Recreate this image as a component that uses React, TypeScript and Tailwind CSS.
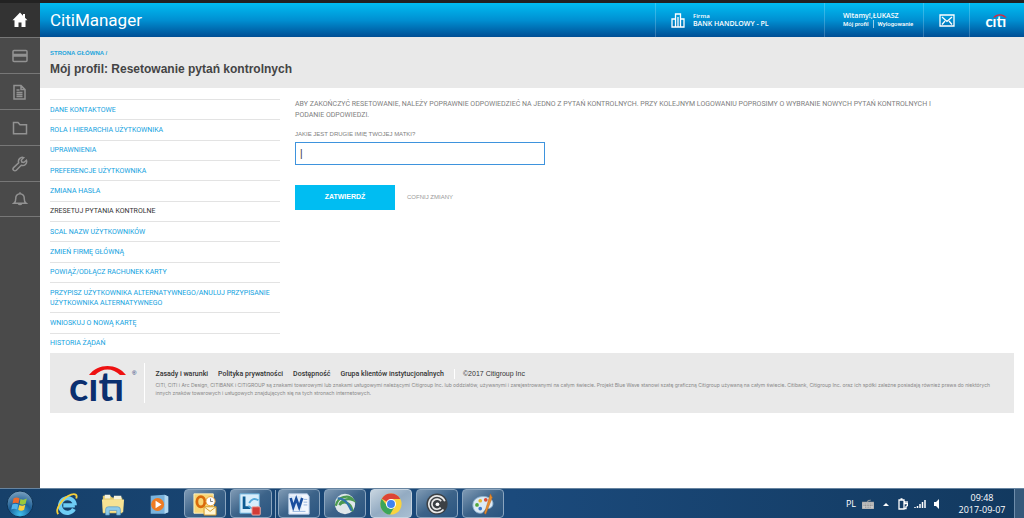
import type { ReactNode } from 'react';
import clsx from 'clsx';

const menu = [
  'DANE KONTAKTOWE',
  'ROLA I HIERARCHIA UŻYTKOWNIKA',
  'UPRAWNIENIA',
  'PREFERENCJE UŻYTKOWNIKA',
  'ZMIANA HASŁA',
  'ZRESETUJ PYTANIA KONTROLNE',
  'SCAL NAZW UŻYTKOWNIKÓW',
  'ZMIEŃ FIRMĘ GŁÓWNĄ',
  'POWIĄŻ/ODŁĄCZ RACHUNEK KARTY',
  'PRZYPISZ UŻYTKOWNIKA ALTERNATYWNEGO/ANULUJ PRZYPISANIE UŻYTKOWNIKA ALTERNATYWNEGO',
  'WNIOSKUJ O NOWĄ KARTĘ',
  'HISTORIA ŻĄDAŃ',
];
const activeItem = 'ZRESETUJ PYTANIA KONTROLNE';

const footerLinks = ['Zasady i warunki', 'Polityka prywatności', 'Dostępność', 'Grupa klientów instytucjonalnych'];

const sideIcons: { label: string; icon: ReactNode }[] = [
  {
    label: 'Karty',
    icon: (
      <>
        <rect x="1" y="2.5" width="14" height="11" rx="1" />
        <path d="M1 6.5h14M1 8h14" />
      </>
    ),
  },
  {
    label: 'Wyciągi',
    icon: <path d="M2 1.500h7l4 4v9.500H2zM9 1.500v4h4M4.500 6h3M4.500 8.500h6M4.500 10.500h6M4.500 12.500h6" />,
  },
  {
    label: 'Dokumenty',
    icon: <path d="M1.500 2.500h4.500l2 2.300h6.500v9h-13z" />,
  },
  {
    label: 'Narzędzia',
    icon: (
      <path d="M14.400 4.200l-2.600 2.300-2-.4-.5-2 2.400-2.500a4 4 0 0 0-5 5.200L1.600 11.600a1.800 1.800 0 0 0 2.700 2.700l4.900-5a4 4 0 0 0 5.200-5.100z" />
    ),
  },
  {
    label: 'Alerty',
    icon: (
      <path d="M2 12.200c1.400-1 1.800-2.200 1.800-5A4.200 4.200 0 0 1 8 2.700a4.200 4.200 0 0 1 4.200 4.500c0 2.800.4 4 1.800 5zM6.300 12.400a1.800 1.800 0 0 0 3.400 0M8 1.200v1.500" />
    ),
  },
];

function CitiLogo({ className, text, arc }: { className: string; text: string; arc: string }) {
  return (
    <svg viewBox="0 0 64 40" className={clsx('overflow-visible', className)} role="img" aria-label="citi">
      <path d="M21 12C30 0 49 0 58 12h-6C45 4.500 34 4.500 27 12z" className={arc} />
      <text x="1" y="38" fontSize="40" fontWeight="700" fontFamily="Lato, sans-serif" className={text}>
        cıtı
      </text>
    </svg>
  );
}

function TaskButton({ label, open, active, children }: { label: string; open?: boolean; active?: boolean; children: ReactNode }) {
  return (
    <button
      aria-label={label}
      className={clsx(
        'flex h-[29px] w-[42px] items-center justify-center rounded-sm border',
        !open && 'border-transparent',
        open && !active && 'border-[#8aa5bf] bg-gradient-to-br from-[#7f9ab4] via-[#3c6389] to-[#2a5580]',
        active && 'border-[#c5d3e0] bg-gradient-to-br from-[#c9d6e1] via-[#93abc2] to-[#a9bfd2]',
      )}
    >
      <svg viewBox="0 0 26 26" className="size-6">
        {children}
      </svg>
    </button>
  );
}

function Taskbar() {
  return (
    <footer className="flex h-[30px] items-center border-t border-[#6784a0] bg-gradient-to-r from-[#16406a] via-[#1b4a7c] to-[#12395f] font-['Open_Sans',sans-serif]">
      <button aria-label="Start" className="ml-1.5 mr-3">
        <svg viewBox="0 0 28 28" className="size-7">
          <defs>
            <radialGradient id="orb" cx=".5" cy=".9" r=".9">
              <stop offset="0" stopColor="#3fc0ee" />
              <stop offset=".5" stopColor="#1b5f97" />
              <stop offset="1" stopColor="#7fa3c0" />
            </radialGradient>
          </defs>
          <circle cx="14" cy="14" r="13" fill="url(#orb)" stroke="#0e3355" />
          <path d="M7.500 8.500q3-1.800 6 0l-1 5q-3-1.600-6 0z" fill="#ee6a2c" />
          <path d="M14.500 9q3 1.600 6.300-.4l-1.200 5.200q-3 1.700-6 .2z" fill="#9ac93c" />
          <path d="M6.300 14.600q3-1.600 6 0l-1.200 5q-2.900-1.500-5.800 0z" fill="#54b4ea" />
          <path d="M13.300 15q3 1.600 6-.2l-1.200 5q-3 1.700-5.900 0z" fill="#fcd13c" />
        </svg>
      </button>
      <div className="flex items-center gap-1">
        <TaskButton label="Internet Explorer">
          <path d="M21.500 14.500H9M20.500 18.500a8 8 0 1 1 1-4" fill="none" stroke="#6fcdf5" strokeWidth="4.500" />
          <path d="M3.500 24C-.5 19 8 6 17.500 2.800c5-1.700 6.800.8 5.500 4.200" fill="none" stroke="#f5cf3a" strokeWidth="2" />
        </TaskButton>
        <TaskButton label="Eksplorator Windows">
          <path d="M2 4h8l2 2h11v17H2z" fill="#e3c968" />
          <path d="M4 3h6v4H4zM14 4h8v4h-8z" fill="#f6f2dc" />
          <path d="M1 8h24l-1 14H2z" fill="#f6e293" />
          <path d="M5 25v-6q0-3 3-3h10q3 0 3 3v6h-4v-5H9v5z" fill="#8ecbea" stroke="#5596bd" strokeWidth=".7" />
        </TaskButton>
        <TaskButton label="Windows Media Player">
          <path d="M4 4l15-1 4 2v17l-4 1.500H4z" fill="#79b3dc" />
          <path d="M19 3l4 2v17l-4 1.500z" fill="#b4d9f0" />
          <circle cx="11.500" cy="13.500" r="7" fill="#ef7b22" />
          <path d="M9.300 9.500l6.500 4-6.500 4z" fill="#fff" />
        </TaskButton>
        <TaskButton label="Outlook" open>
          <path d="M1 2h21v21H1z" fill="#f8d777" />
          <path d="M1 2h21v21H1z" fill="none" stroke="#fff4c8" />
          <ellipse cx="8.500" cy="10.500" rx="4.300" ry="5.500" fill="none" stroke="#d96a0b" strokeWidth="3" />
          <circle cx="19" cy="10" r="5" fill="#fff" stroke="#e5962b" />
          <path d="M19 7v3.300h2.500" fill="none" stroke="#777" />
          <path d="M12 16h13v9H12z" fill="#fff6d5" stroke="#d59a24" />
          <path d="M12 16l6.500 5 6.500-5" fill="none" stroke="#d59a24" />
        </TaskButton>
        <TaskButton label="Lync" open>
          <path d="M1 2h21v21H1z" fill="#d8eefb" stroke="#62aedb" />
          <path d="M5.500 5v12H12" fill="none" stroke="#0d5b92" strokeWidth="3" />
          <path d="M11 12q4-7 10-3M10 15q5 5 11 1" fill="none" stroke="#55a9d8" strokeWidth="2" />
          <rect x="14" y="16" width="9" height="9" rx="1" fill="#d33c36" stroke="#f1b3ac" />
        </TaskButton>
        <span className="-mx-0.5 h-7 w-0.5 border-r border-[#8aa5bf]" />
        <TaskButton label="Word" open>
          <path d="M2 2h20l2 3v19H2z" fill="#f3f7fd" stroke="#b6cdea" />
          <path d="M2 4h14v15H2z" fill="#dce9f8" />
          <path d="M4 6.500l2.800 10 3.200-9 3.200 9L16.500 6.500" fill="none" stroke="#194e9e" strokeWidth="2.800" />
          <path d="M18 8h4M18 11h4M18 14h4M6 21h14" stroke="#8fb0dc" />
        </TaskButton>
        <TaskButton label="AnyConnect" open>
          <circle cx="13" cy="13" r="11" fill="#dfe7ea" />
          <path d="M3 15C5 5 17 2 22 9c-7-3-13 0-15 5 5-5 13-3 14 7" fill="none" stroke="#4b9a51" strokeWidth="2.500" />
          <path d="M5 7c8 0 11 5 15 13" fill="none" stroke="#3174ae" strokeWidth="2.500" />
        </TaskButton>
        <TaskButton label="Chrome" open active>
          <circle cx="13" cy="13" r="11.500" fill="#f9d33f" />
          <path d="M13 13L3 7.300A11.500 11.500 0 0 1 23 7.500H13z" fill="#dc4436" />
          <path d="M3 7.300A11.500 11.500 0 0 0 12 24.500l5-9L13 13l-4 2.500z" fill="#3ba55a" />
          <circle cx="13" cy="13" r="5.500" fill="#fff" />
          <circle cx="13" cy="13" r="4.300" fill="#3f82ef" />
        </TaskButton>
        <TaskButton label="Citrix Receiver" open>
          <circle cx="13" cy="13" r="11.500" fill="#3c4044" />
          <path d="M20 19a9 9 0 1 1 1.500-9M17 17a5.500 5.500 0 1 1 .5-7" fill="none" stroke="#e8e8e8" strokeWidth="1.800" />
          <circle cx="13.500" cy="13.300" r="2" fill="#fff" />
        </TaskButton>
        <TaskButton label="Paint" open>
          <path d="M2 14C2 6 12 3 19 6s6 12-1 12c-4 0-3 5-8 5s-8-4-8-9z" fill="#dceaf5" stroke="#8eb2cf" />
          <circle cx="6.500" cy="14" r="2" fill="#50a73b" />
          <circle cx="10" cy="9.500" r="2" fill="#e5b62c" />
          <circle cx="16" cy="8.500" r="2" fill="#d84a38" />
          <circle cx="10" cy="18" r="2" fill="#3c78cc" />
          <path d="M21 2l2 4-7 18-1.500-1z" fill="#e88d2f" stroke="#b5611a" strokeWidth=".5" />
        </TaskButton>
      </div>
      <div className="ml-auto flex items-center gap-1.5 text-white">
        <span className="text-[9px]">PL</span>
        <svg viewBox="0 0 12 10" className="w-3">
          <path d="M0 3h12v7H0zM5 3q0-2 4-2" fill="#c8c8c8" stroke="#8a8a8a" strokeWidth=".6" />
          <path d="M1.500 5h9M1.500 6.500h9M3 8.200h6" stroke="#777" strokeWidth=".7" strokeDasharray="1 .6" />
        </svg>
        <svg viewBox="0 0 12 6" className="w-3">
          <path d="M3 5L6 2l3 3z" fill="#fff" />
        </svg>
        <svg viewBox="0 0 10 12" className="w-2.5">
          <path d="M1 2h5v9H1zM2.500.8h2M7 3v2M9 3v2M6.500 5.500h3v2l-1.500 1v2H6" fill="none" stroke="#fff" strokeWidth="1.300" />
        </svg>
        <svg viewBox="0 0 12 10" className="w-3">
          <path d="M1 9V8M3.500 9V7M6 9V5M8.500 9V3M11 9V1" stroke="#fff" strokeWidth="1.500" />
        </svg>
        <svg viewBox="0 0 12 10" className="w-3">
          <path d="M2 3h2L7 0v10L4 7H2z" fill="#fff" />
        </svg>
        <time className="w-16 text-center text-[9px] leading-3">
          09:48
          <br />
          2017-09-07
        </time>
      </div>
      <span className="w-2.5 self-stretch border-l border-[#6f8dab] bg-[#36597b]" />
    </footer>
  );
}

function Header() {
  return (
    <header className="flex h-[34px] items-stretch bg-gradient-to-b from-[#00bdf2] via-[#0090d2] to-[#004e95] font-[Roboto,sans-serif] text-white">
      <a href="#" className="flex-1 self-center px-2.5 text-[17px] leading-5">CitiManager</a>
      <div className="flex w-[169px] items-center gap-2 border-l border-white/20 pl-[15px]">
        <svg viewBox="0 0 14 15" className="w-3.5" fill="none" stroke="currentColor" strokeWidth="1.300">
          <path d="M4.500 14V1h5v13M4.500 6H1v8h12V6H9.500M.500 14h13M7 14V4" />
        </svg>
        <p className="font-['Open_Sans',sans-serif] text-[7px] font-semibold leading-2">
          <span className="block text-[6px]">Firma</span>
          BANK HANDLOWY - PL
        </p>
      </div>
      <div className="flex w-[99px] flex-col justify-center border-l border-white/20 pl-[18px] font-medium">
        <p className="font-['Open_Sans',sans-serif] text-[7px] font-semibold leading-2">Witamy!,ŁUKASZ</p>
        <p className="flex gap-1 text-[6px] leading-2">
          <a href="#">Mój profil</a>
          <span className="border-l border-white/60" />
          <a href="#">Wylogowanie</a>
        </p>
      </div>
      <a href="#" aria-label="Wiadomości" className="flex w-[46px] items-center justify-center border-l border-white/20">
        <svg viewBox="0 0 16 13" className="w-4" fill="none" stroke="currentColor" strokeWidth="1.300">
          <path d="M1 1h14v11H1zM3 3l5 4.500L13 3M3 10.500l3-3.500M13 10.500L10 7" />
        </svg>
      </a>
      <a href="#" className="flex w-[55px] items-center border-l border-white/20 pl-[15px]">
        <CitiLogo className="w-6" text="fill-white" arc="fill-[#d8283f]" />
      </a>
    </header>
  );
}

export default function App() {
  return (
    <div className="flex min-h-screen flex-col bg-white font-['Liberation_Sans',sans-serif]">
      <div className="flex flex-1">
        <nav aria-label="Główne" className="w-10 shrink-0 bg-[#4a4a4a]">
          <a href="#" aria-label="Start" className="flex h-[37px] items-center justify-center border-t-3 border-[#222] bg-[#333] text-white">
            <svg viewBox="0 0 16 16" className="w-4" fill="currentColor">
              <path d="M8 .5L.5 8.300h2V15h4v-4.500h3V15h4V8.300h2L13 5.700V2h-2v1.700z" />
            </svg>
          </a>
          {sideIcons.map((item) => (
            <a
              key={item.label}
              href="#"
              aria-label={item.label}
              className="flex h-9 items-center justify-center border-t border-[#777] text-[#929292] last:border-b"
            >
              <svg viewBox="0 0 16 16" className="w-4" fill="none" stroke="currentColor" strokeWidth="1.500">
                {item.icon}
              </svg>
            </a>
          ))}
        </nav>

        <div className="flex min-w-0 flex-1 flex-col border-t-3 border-[#222]">
          <Header />
          <div className="h-[51px] bg-[#e9e9e9] px-2.5 pt-3">
            <a href="#" className="block text-[6px] font-bold leading-2 text-[#1ea5dc]">STRONA GŁÓWNA /</a>
            <h1 className="mt-1 text-xs font-bold leading-4 text-[#444]">Mój profil: Resetowanie pytań kontrolnych</h1>
          </div>

          <main className="flex gap-[15px] px-2.5 pt-[11px]">
            <ul className="flex min-h-[254px] w-[230px] shrink-0 flex-col font-[Roboto,sans-serif] text-[7px] leading-[10px] text-[#12a2e0]">
              {menu.map((item) => (
                <li key={item} className="flex grow items-center border-t border-[#e3e3e3] py-1">
                  <a href="#" className={clsx(item === activeItem && 'text-[#333]')}>{item}</a>
                </li>
              ))}
            </ul>
            <form className="min-w-0 text-[7px] text-[#808080]" onSubmit={(e) => e.preventDefault()}>
              <p className="max-w-[645px] font-[Roboto,sans-serif] leading-[11px]">
                ABY ZAKOŃCZYĆ RESETOWANIE, NALEŻY POPRAWNIE ODPOWIEDZIEĆ NA JEDNO Z PYTAŃ KONTROLNYCH. PRZY KOLEJNYM
                LOGOWANIU POPROSIMY O WYBRANIE NOWYCH PYTAŃ KONTROLNYCH I PODANIE ODPOWIEDZI.
              </p>
              <label htmlFor="answer" className="mt-[9px] block text-[6px] leading-2">JAKIE JEST DRUGIE IMIĘ TWOJEJ MATKI?</label>
              <input
                id="answer"
                type="text"
                defaultValue="|"
                className="mt-1 block h-[23px] w-[250px] border border-[#3e93dd] px-1 text-[10px] text-[#333] outline-none"
              />
              <div className="mt-5 flex items-center gap-3">
                <button type="submit" className="h-[25px] w-[100px] bg-[#00bdf2] font-bold text-white">ZATWIERDŹ</button>
                <button type="reset" className="text-[6px] text-[#999]">COFNIJ ZMIANY</button>
              </div>
            </form>
          </main>

          <section className="mx-2.5 flex items-center bg-[#e9e9e9] py-2.5 pl-[18px] pr-3">
            <div className="flex shrink-0 border-r border-white pr-2">
              <CitiLogo className="h-10" text="fill-[#0b2f6f]" arc="fill-[#ee1111]" />
              <span className="pt-1 text-[6px] leading-3 text-[#0b2f6f]">®</span>
            </div>
            <div className="pl-2.5">
              <div className="flex items-center gap-2.5 text-[7px] leading-[10px] text-[#333]">
                {footerLinks.map((link) => (
                  <a key={link} href="#" className="font-[Roboto,sans-serif] font-medium">{link}</a>
                ))}
                <span className="border-l border-white pl-2">©2017 Citigroup Inc</span>
              </div>
              <p className="mt-0.5 font-[Inter,sans-serif] text-[5px] leading-2 text-[#888]">
                CITI, CITI i Arc Design, CITIBANK i CITIGROUP są znakami towarowymi lub znakami usługowymi należącymi
                Citigroup Inc. lub oddziałów, używanymi i zarejestrowanymi na całym świecie. Projekt Blue Wave stanowi
                szatę graficzną Citigroup używaną na całym świecie. Citibank, Citigroup Inc. oraz ich spółki zależne
                posiadają również prawa do niektórych innych znaków towarowych i usługowych znajdujących się na tych
                stronach internetowych.
              </p>
            </div>
          </section>
        </div>
      </div>
      <Taskbar />
    </div>
  );
}
